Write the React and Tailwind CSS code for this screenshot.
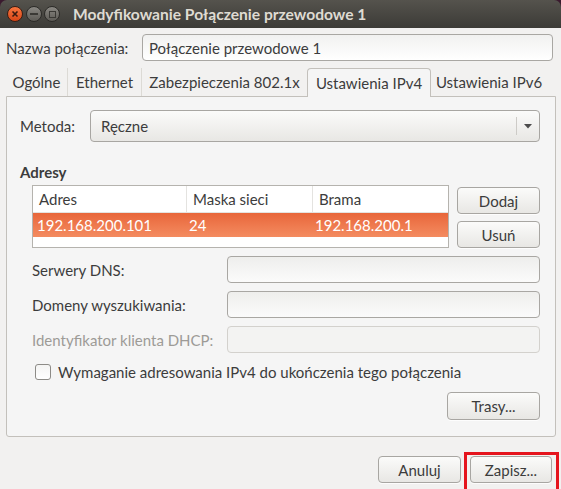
import React from "react";

const font = { fontFamily: "Lato, 'Noto Sans', sans-serif" };

function Btn({ children, className = "" }) {
  return (
    <div
      className={
        "flex items-center justify-center rounded-[4px] border border-[#a8a6a2] bg-gradient-to-b from-[#fbfbfa] to-[#e8e7e4] text-[#3c3c3c] shadow-[0_1px_0_rgba(255,255,255,0.8)] " +
        className
      }
    >
      {children}
    </div>
  );
}

function Field({ disabled = false, className = "" }) {
  return (
    <div
      className={
        (disabled
          ? "border-[#d3d1cd] bg-[#f3f3f2] "
          : "border-[#a9a7a3] bg-gradient-to-b from-[#eeeeec] to-[#fbfbfb] ") +
        "rounded-[4px] border " +
        className
      }
    />
  );
}

export default function App() {
  return (
    <div className="w-[561px] h-[489px] overflow-hidden bg-[#3a1a2e] text-[15px] leading-[22px] text-[#3c3c3c]" style={font}>
      <div className="flex h-full flex-col">
        {/* title bar */}
        <div className="flex h-[28px] shrink-0 items-center rounded-t-[7px] bg-gradient-to-b from-[#55534d] to-[#3c3b37] pl-[7px]">
          <div className="flex h-[16px] w-[16px] items-center justify-center rounded-full border border-[#3a1e14] bg-gradient-to-b from-[#f7753e] to-[#d84515]">
            <svg width="8" height="8" viewBox="0 0 8 8">
              <path d="M1.5 1.5 L6.5 6.5 M6.5 1.5 L1.5 6.5" stroke="#3a1a10" strokeWidth="1.6" />
            </svg>
          </div>
          <div className="ml-[3px] flex h-[16px] w-[16px] items-center justify-center rounded-full border border-[#2c2b28] bg-gradient-to-b from-[#8a8883] to-[#5d5b56]">
            <div className="h-[2px] w-[8px] bg-[#3a3935]" />
          </div>
          <div className="ml-[2px] flex h-[16px] w-[16px] items-center justify-center rounded-full border border-[#2c2b28] bg-gradient-to-b from-[#8a8883] to-[#5d5b56]">
            <div className="h-[7px] w-[7px] border-[1.5px] border-[#3a3935]" />
          </div>
          <div className="ml-[13px] text-[15.6px] font-bold text-[#dfdbd2]">Modyfikowanie Połączenie przewodowe 1</div>
        </div>

        {/* body */}
        <div className="flex flex-1 flex-col bg-[#f2f1f0]">
          <div className="mt-[6px] flex h-[27px] items-center pl-[6px] pr-[8px]">
            <div className="w-[136px]">Nazwa połączenia:</div>
            <div className="flex h-[27px] flex-1 items-center rounded-[4px] border border-[#a9a7a3] bg-gradient-to-b from-[#f1f1f0] to-[#ffffff] px-[6px]">
              Połączenie przewodowe 1
            </div>
          </div>

          {/* tabs */}
          <div className="mt-[7px] flex h-[28px] pl-[6px] items-end">
            <div className="flex h-[28px] w-[62px] items-center justify-center border-r border-[#dcdad5]">Ogólne</div>
            <div className="flex h-[28px] w-[74px] items-center justify-center border-r border-[#dcdad5]">Ethernet</div>
            <div className="flex h-[28px] w-[165px] items-center justify-center">Zabezpieczenia 802.1x</div>
            <div className="relative z-10 flex h-[29px] w-[124px] -mb-[1px] items-center justify-center rounded-t-[4px] border border-b-0 border-[#c3c0bb] bg-[#f5f5f5]">
              Ustawienia IPv4
            </div>
            <div className="flex h-[28px] w-[116px] items-center justify-center">Ustawienia IPv6</div>
          </div>

          {/* notebook panel */}
          <div className="ml-[6px] flex h-[341px] w-[550px] flex-col rounded-b-[3px] border border-[#c3c0bb] bg-[#f5f5f5] pl-[13px] pr-[15px]">
            <div className="mt-[13px] flex h-[32px] items-center">
              <div className="w-[70px]">Metoda:</div>
              <div className="flex h-[32px] flex-1 items-center rounded-[4px] border border-[#a8a6a2] bg-gradient-to-b from-[#fbfbfa] to-[#e8e7e4]">
                <div className="flex-1 pl-[10px]">Ręczne</div>
                <div className="h-[18px] w-px bg-[#cdcbc7]" />
                <svg width="22" height="8" viewBox="0 0 22 8">
                  <path d="M7 2 L15 2 L11 6.5 Z" fill="#4c4c4c" />
                </svg>
              </div>
            </div>

            <div className="mt-[19px] font-bold">Adresy</div>

            <div className="mt-[2px] flex">
              <div className="ml-[12px] flex h-[63px] w-[417px] flex-col border border-[#b5b3ae] bg-white">
                <div className="flex h-[27px] items-center border-b border-[#e4e3e0]">
                  <div className="flex h-full w-[154px] items-center border-r border-[#e4e3e0] pl-[6px]">Adres</div>
                  <div className="flex h-full w-[126px] items-center border-r border-[#e4e3e0] pl-[6px]">Maska sieci</div>
                  <div className="flex h-full flex-1 items-center pl-[6px]">Brama</div>
                </div>
                <div className="flex h-[24px] items-center bg-gradient-to-b from-[#e8663a] to-[#f48b60] text-white">
                  <div className="w-[154px] pl-[4px]">192.168.200.101</div>
                  <div className="w-[126px] pl-[2px]">24</div>
                  <div className="flex-1 pl-[2px]">192.168.200.1</div>
                </div>
              </div>
              <div className="ml-[8px] flex flex-col">
                <Btn className="mt-[2px] h-[27px] w-[83px]">Dodaj</Btn>
                <Btn className="mt-[7px] h-[27px] w-[83px]">Usuń</Btn>
              </div>
            </div>

            <div className="mt-[8px] flex h-[27px] items-center">
              <div className="ml-[12px] w-[195px]">Serwery DNS:</div>
              <Field className="h-[27px] flex-1" />
            </div>
            <div className="mt-[8px] flex h-[27px] items-center">
              <div className="ml-[12px] w-[195px]">Domeny wyszukiwania:</div>
              <Field className="h-[27px] flex-1" />
            </div>
            <div className="mt-[8px] flex h-[27px] items-center">
              <div className="ml-[12px] w-[195px] text-[#9d9b97]">Identyfikator klienta DHCP:</div>
              <Field disabled className="h-[27px] flex-1" />
            </div>

            <div className="mt-[8px] flex h-[22px] items-center">
              <div className="ml-[15px] h-[16px] w-[16px] rounded-[3px] border border-[#8d8b87] bg-gradient-to-b from-[#f4f4f3] to-[#ffffff]" />
              <div className="ml-[7px]">Wymaganie adresowania IPv4 do ukończenia tego połączenia</div>
            </div>

            <div className="mt-[9px] flex justify-end">
              <Btn className="h-[28px] w-[93px]">Trasy...</Btn>
            </div>
          </div>

          {/* dialog buttons */}
          <div className="mt-[15px] flex justify-end">
            <Btn className="mt-[4px] h-[27px] w-[83px]">Anuluj</Btn>
            <div className="ml-[3px] h-[45px] border-[3px] border-[#e5141d] pt-[1px] pl-[3px] pr-[4px]">
              <Btn className="h-[27px] w-[82px]">Zapisz...</Btn>
            </div>
            <div className="w-[2px]" />
          </div>
        </div>
      </div>
    </div>
  );
}
